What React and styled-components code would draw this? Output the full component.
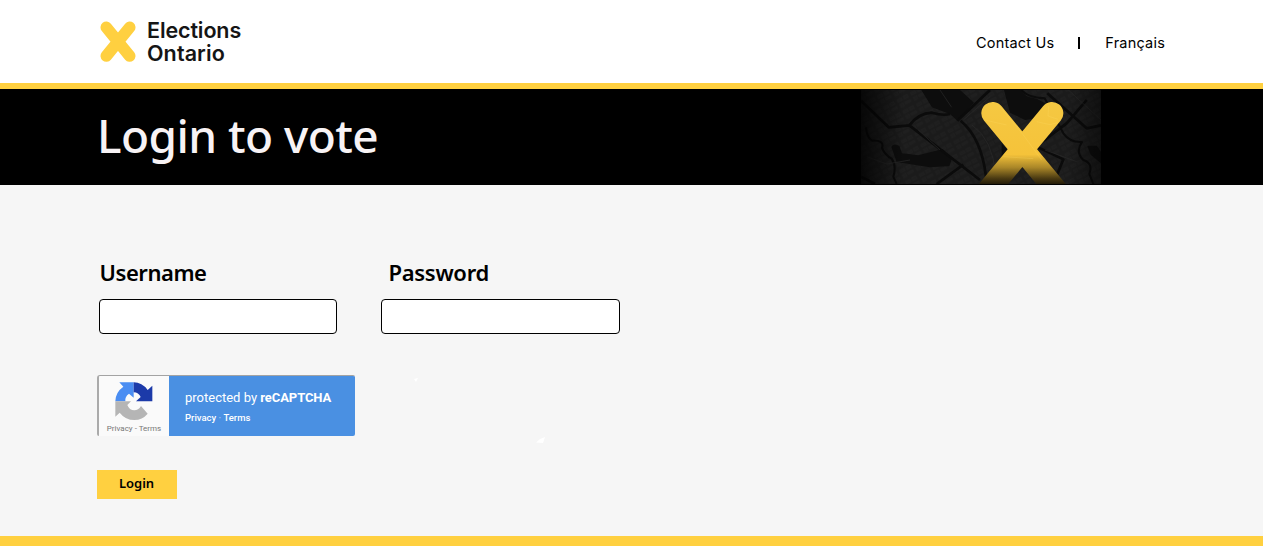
import React from 'react';
import styled, { createGlobalStyle } from 'styled-components';

const Global = createGlobalStyle`
  * { box-sizing: border-box; }
  body { margin: 0; background: #f6f6f6; color: #000; font-family: "Noto Sans", sans-serif; }
`;

const Page = styled.div`
  display: flex;
  flex-direction: column;
  height: 546px;
  overflow: hidden;
  background: #f6f6f6;
`;

const Header = styled.header`
  display: flex;
  justify-content: space-between;
  height: 89px;
  padding: 0 98px 0 100px;
  background: #fff;
  border-bottom: 6px solid #ffd040;
`;

const Brand = styled.div`
  display: flex;
  gap: 11px;
  padding-top: 21px;
`;

const BrandName = styled.div`
  margin-top: -2px;
  font: 600 21.5px/22.5px Inter, sans-serif;
  color: #151515;
`;

const BrandLine = styled.div`
  letter-spacing: ${(p) => p.$spacing};
  white-space: nowrap;
`;

const Nav = styled.nav`
  display: flex;
  align-items: center;
  height: 86px;
  font: 400 14.5px/20px Inter, sans-serif;
`;

const NavLink = styled.a`
  color: #000;
  white-space: nowrap;
  letter-spacing: ${(p) => p.$spacing};
`;

const NavDivider = styled.span`
  width: 2px;
  height: 12px;
  margin: 0 25px 0 24px;
  background: #000;
`;

const Banner = styled.section`
  display: flex;
  justify-content: space-between;
  height: 96px;
  padding: 1px 162px 0 97px;
  background: #000;
`;

const Title = styled.h1`
  margin: 0;
  padding-top: 13px;
  font-size: 46px;
  line-height: 64px;
  font-weight: 500;
  letter-spacing: -0.57px;
  color: #f8f3f5;
  white-space: nowrap;
`;

const Main = styled.main`
  flex: 1;
  padding: 73px 97px 0;
`;

const Fields = styled.div`
  display: flex;
  gap: 44px;
  padding-left: 2px;
`;

const Field = styled.div`
  width: ${(p) => p.$width}px;
`;

const Label = styled.label`
  display: block;
  height: 41px;
  padding-left: ${(p) => p.$indent}px;
  font-size: 22px;
  line-height: 29px;
  font-weight: 600;
  letter-spacing: ${(p) => p.$spacing};
`;

const Input = styled.input`
  display: block;
  width: 100%;
  height: 35px;
  padding: 0 10px;
  background: #fff;
  border: 1px solid #000;
  border-radius: 4px;
  outline: none;
`;

const Captcha = styled.div`
  display: flex;
  width: 258px;
  height: 61px;
  margin-top: 41px;
  border-top: 1px solid #a3a3a3;
  border-left: 2px solid #aaa;
  border-radius: 3px 2px 2px 2px;
  overflow: hidden;
  font-family: Roboto, sans-serif;
`;

const CaptchaMark = styled.div`
  display: flex;
  flex-direction: column;
  align-items: center;
  width: 70px;
  padding-top: 6px;
  background: #fafafa;
  font-size: 8px;
  line-height: 10px;
  color: #777;
  white-space: nowrap;
`;

const CaptchaTerms = styled.span`
  margin-top: 3px;
`;

const CaptchaText = styled.div`
  flex: 1;
  padding: 13px 0 0 16px;
  background: #4a90e2;
  color: #fff;
`;

const Protected = styled.div`
  font-size: 13px;
  line-height: 18px;
  white-space: nowrap;
  b { font-weight: 700; letter-spacing: -0.08px; }
`;

const Policies = styled.div`
  margin-top: 5px;
  font-size: 9.5px;
  line-height: 12px;
  font-weight: 500;
  white-space: nowrap;
`;

const PolicyDot = styled.span`
  opacity: 0.5;
`;

const LoginButton = styled.button`
  display: block;
  width: 80px;
  height: 29px;
  margin-top: 34px;
  padding: 0 1px 3px 0;
  border: 0;
  background: #ffd040;
  color: #000;
  font: 600 13px/20px "Noto Sans", sans-serif;
`;

const Footer = styled.footer`
  height: 10px;
  background: #ffd040;
`;

const Fleck = styled.svg`
  position: absolute;
  left: ${(p) => p.$x}px;
  top: ${(p) => p.$y}px;
`;

function LogoMark() {
  return (
    <svg width="36" height="41" viewBox="31 31 108 123">
      <path d="M50 50L120 136M120 50L50 136" stroke="#ffd040" strokeWidth="35" strokeLinecap="round" />
    </svg>
  );
}

function MapArt() {
  return (
    <svg width="240" height="94" viewBox="33 30 720 282">
      <defs>
        <linearGradient id="cross" gradientUnits="userSpaceOnUse" x1="0" y1="66" x2="0" y2="312">
          <stop offset="0" stopColor="#f5c842" />
          <stop offset=".64" stopColor="#f5c33a" />
          <stop offset=".8" stopColor="#a98628" />
          <stop offset=".93" stopColor="#4b3b12" />
          <stop offset="1" stopColor="#241c09" />
        </linearGradient>
        <linearGradient id="fade" x1="0" x2="1" y1="0" y2="0">
          <stop offset="0" stopColor="#000" stopOpacity=".75" />
          <stop offset=".18" stopColor="#000" stopOpacity="0" />
          <stop offset=".86" stopColor="#000" stopOpacity="0" />
          <stop offset="1" stopColor="#000" stopOpacity=".45" />
        </linearGradient>
        <pattern id="blocks" width="46" height="38" patternUnits="userSpaceOnUse" patternTransform="rotate(-28)">
          <path d="M4 5h15v8H4zM25 4h14v10H25zM5 21h11v10H5zM22 22h18v7H22z" fill="#202020" stroke="#262626" />
        </pattern>
      </defs>
      <path d="M33 30h720v282H33z" fill="#1b1b1b" />
      <path d="M33 30h720v282H33z" fill="url(#blocks)" opacity=".65" />
      <path d="M214 30L246 82L300 102L322 122L372 68L330 30zM124 200Q132 188 148 198L156 220L205 226L278 207L306 236L298 258L240 262L140 246zM462 30L515 30Q520 52 560 56L585 70L575 112L525 120L480 98zM455 190L480 218L455 240zM712 198L740 197L753 215V250L722 224z" fill="#0d0d0d" />
      <g fill="none" stroke="#0b0b0b" strokeLinejoin="round">
        <path d="M33 62L116 142L178 136Q205 100 246 98Q280 108 300 102M178 136L390 300M332 122Q395 175 408 290L404 312M322 122L420 30M260 312L340 254M592 40L710 145L753 136M530 220L650 130L710 60M560 200L640 238L610 312M33 290L75 312" strokeWidth="8" />
        <path d="M48 142Q50 172 66 182Q104 180 96 204Q105 225 125 236Q140 258 130 290L140 312M515 30Q530 52 584 55L640 160Q660 188 696 186Q675 216 700 240Q730 250 718 282L730 312" strokeWidth="6" />
      </g>
      <path d="M366 135Q430 180 436 285M270 30L305 82M50 230L110 252L180 240M655 30L753 120M585 210L680 245M340 120L420 50M205 150L270 210" fill="none" stroke="#2a2a2a" strokeWidth="2" />
      <path d="M33 30h720v282H33z" fill="url(#fade)" />
      <path d="M428 100L628 342M606 100L406 342" stroke="url(#cross)" strokeWidth="68" strokeLinecap="round" />
      <path d="M448 78L520 165L575 240M404 120L470 135M560 125L600 134L622 128M596 78L594 108L624 118M460 230L550 236" fill="none" stroke="#ffdb68" strokeWidth="2" opacity=".35" />
    </svg>
  );
}

function RecaptchaMark() {
  return (
    <svg width="38" height="39" viewBox="76 51 114 117">
      <path d="M132 52H89L101 65Q77 82 77 109H107Q105 95 118 86L132 98z" fill="#4a8df2" />
      <path d="M132 52Q157 52 174 75L188 62V109H139L153 96Q147 82 132 82z" fill="#1c3aa9" />
      <path d="M77 109H124L113 120Q119 136 134 136Q146 136 154 123L174 146Q158 165 134 165Q107 165 90 143L77 155z" fill="#b5b5b5" />
    </svg>
  );
}

export default function App() {
  return (
    <>
      <Global />
      <Page>
        <Header>
          <Brand>
            <LogoMark />
            <BrandName>
              <BrandLine $spacing="-0.12px">Elections</BrandLine>
              <BrandLine $spacing="0.1px">Ontario</BrandLine>
            </BrandName>
          </Brand>
          <Nav>
            <NavLink $spacing="0.2px">Contact Us</NavLink>
            <NavDivider />
            <NavLink $spacing="0.2px">Français</NavLink>
          </Nav>
        </Header>
        <Banner>
          <Title>Login to vote</Title>
          <MapArt />
        </Banner>
        <Main>
          <Fields>
            <Field $width={238}>
              <Label htmlFor="user" $indent={0.5} $spacing="-0.45px">Username</Label>
              <Input id="user" />
            </Field>
            <Field $width={239}>
              <Label htmlFor="pass" $indent={7.5} $spacing="-0.3px">Password</Label>
              <Input id="pass" type="password" />
            </Field>
          </Fields>
          <Captcha>
            <CaptchaMark>
              <RecaptchaMark />
              <CaptchaTerms>Privacy - Terms</CaptchaTerms>
            </CaptchaMark>
            <CaptchaText>
              <Protected>protected by <b>reCAPTCHA</b></Protected>
              <Policies>Privacy <PolicyDot>·</PolicyDot> Terms</Policies>
            </CaptchaText>
          </Captcha>
          <LoginButton>Login</LoginButton>
        </Main>
        <Footer />
      </Page>
      <Fleck $x={414} $y={378} width="4" height="5"><path d="M0 1L4 0L2 4z" fill="#fff" /></Fleck>
      <Fleck $x={536} $y={437} width="9" height="6"><path d="M0 5.500L4 2L9 0L7 6z" fill="#fff" /></Fleck>
    </>
  );
}
